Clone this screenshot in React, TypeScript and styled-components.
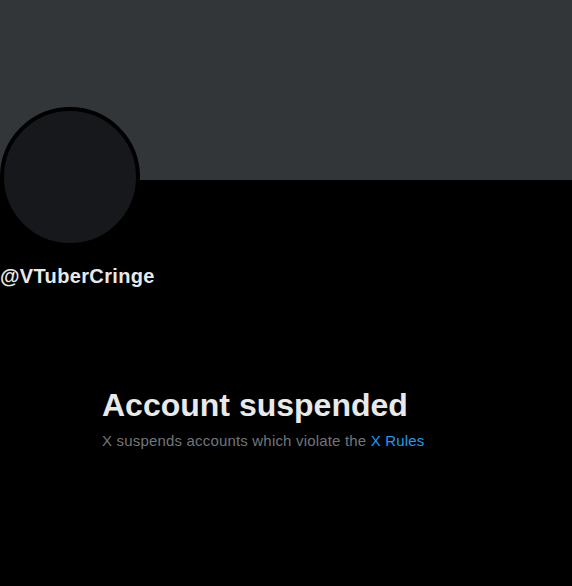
import React from "react";
import styled, { createGlobalStyle } from "styled-components";

const Global = createGlobalStyle`
  html, body { margin: 0; padding: 0; background: #000; }
  body { font-family: "Liberation Sans", Arial, sans-serif; -webkit-font-smoothing: antialiased; }
`;

const Page = styled.div`
  width: 572px;
  min-height: 586px;
  background: #000;
  display: flex;
  flex-direction: column;
  overflow: hidden;
`;

const Banner = styled.div`
  height: 180px;
  background: #333639;
`;

const ProfileHead = styled.div`
  display: flex;
  flex-direction: column;
  align-items: flex-start;
`;

const Avatar = styled.div`
  margin-top: -73px;
  width: 140px;
  height: 140px;
  box-sizing: border-box;
  border-radius: 50%;
  border: 4px solid #000;
  background: #16181c;
`;

const Handle = styled.div`
  margin-top: 17px;
  color: #e7e9ea;
  font-size: 20px;
  line-height: 24px;
  font-weight: 700;
  letter-spacing: 0.35px;
`;

const Empty = styled.div`
  width: 368px;
  margin: 99px auto 0;
  display: flex;
  flex-direction: column;
`;

const Title = styled.h2`
  margin: 0;
  color: #e7e9ea;
  font-size: 32px;
  line-height: 36px;
  font-weight: 700;
`;

const Sub = styled.p`
  margin: 8px 0 0;
  color: #71767b;
  font-size: 15px;
  line-height: 20px;
  letter-spacing: 0.18px;
`;

const Link = styled.a`
  color: #1d9bf0;
  text-decoration: none;
`;

export default function App() {
  return (
    <>
      <Global />
      <Page>
        <Banner />
        <ProfileHead>
          <Avatar />
          <Handle>@VTuberCringe</Handle>
        </ProfileHead>
        <Empty>
          <Title>Account suspended</Title>
          <Sub>
            X suspends accounts which violate the <Link href="#">X Rules</Link>
          </Sub>
        </Empty>
      </Page>
    </>
  );
}
